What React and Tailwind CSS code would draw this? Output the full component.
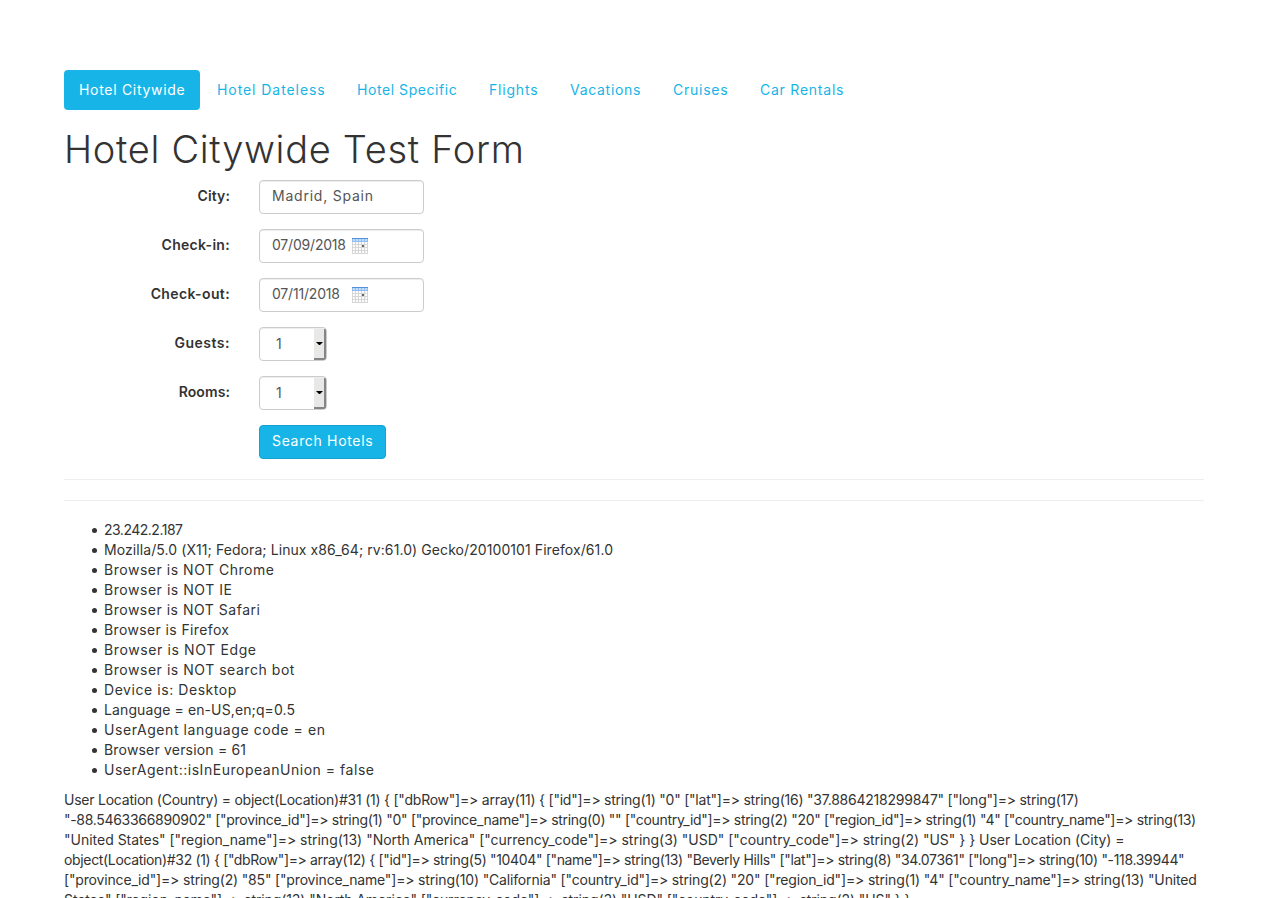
const tabs = [
  { label: "Hotel Citywide", className: "w-[136px] rounded bg-[#17b5e7] text-white tracking-[0.7px]" },
  { label: "Hotel Dateless", className: "w-[138px] tracking-[0.93px]" },
  { label: "Hotel Specific", className: "w-[130px] tracking-[0.56px]" },
  { label: "Flights", className: "w-[79px] tracking-[0.8px]" },
  { label: "Vacations", className: "w-[101px] tracking-[0.7px]" },
  { label: "Cruises", className: "w-[85px] tracking-[0.74px]" },
  { label: "Car Rentals", className: "w-[114px] tracking-[0.76px]" },
];

const facts = [
  { text: "23.242.2.187", className: "tracking-[-0.499px]" },
  { text: "Mozilla/5.0 (X11; Fedora; Linux x86_64; rv:61.0) Gecko/20100101 Firefox/61.0", className: "tracking-[0.081px]" },
  { text: "Browser is NOT Chrome", className: "tracking-[0.527px]" },
  { text: "Browser is NOT IE", className: "tracking-[0.546px]" },
  { text: "Browser is NOT Safari", className: "tracking-[0.518px]" },
  { text: "Browser is Firefox", className: "tracking-[0.375px]" },
  { text: "Browser is NOT Edge", className: "tracking-[0.621px]" },
  { text: "Browser is NOT search bot", className: "tracking-[0.54px]" },
  { text: "Device is: Desktop", className: "tracking-[0.56px]" },
  { text: "Language = en-US,en;q=0.5", className: "tracking-[0.113px]" },
  { text: "UserAgent language code = en", className: "tracking-[0.57px]" },
  { text: "Browser version = 61", className: "tracking-[0.182px]" },
  { text: "UserAgent::isInEuropeanUnion = false", className: "tracking-[0.525px]" },
];

const dump = [
  { text: 'User Location (Country) = object(Location)#31 (1) { ["dbRow"]=> array(11) { ["id"]=> string(1) "0" ["lat"]=> string(16) "37.8864218299847" ["long"]=> string(17)', className: "tracking-[-0.234px]" },
  { text: '"-88.5463366890902" ["province_id"]=> string(1) "0" ["province_name"]=> string(0) "" ["country_id"]=> string(2) "20" ["region_id"]=> string(1) "4" ["country_name"]=> string(13)', className: "tracking-[-0.304px]" },
  { text: '"United States" ["region_name"]=> string(13) "North America" ["currency_code"]=> string(3) "USD" ["country_code"]=> string(2) "US" } } User Location (City) =', className: "tracking-[-0.011px]" },
  { text: 'object(Location)#32 (1) { ["dbRow"]=> array(12) { ["id"]=> string(5) "10404" ["name"]=> string(13) "Beverly Hills" ["lat"]=> string(8) "34.07361" ["long"]=> string(10) "-118.39944"', className: "tracking-[-0.341px]" },
  { text: '["province_id"]=> string(2) "85" ["province_name"]=> string(10) "California" ["country_id"]=> string(2) "20" ["region_id"]=> string(1) "4" ["country_name"]=> string(13) "United', className: "tracking-[-0.165px]" },
  { text: 'States" ["region_name"]=> string(13) "North America" ["currency_code"]=> string(3) "USD" ["country_code"]=> string(2) "US" } }', className: "tracking-[-0.1px]" },
];

const control =
  "flex h-[34px] items-center rounded border border-[#cccccc] bg-white text-[#555555] shadow-[inset_0_1px_1px_rgba(0,0,0,0.075)]";

function CalendarIcon() {
  return (
    <svg className="h-4 w-4 shrink-0" viewBox="0 0 16 16" shapeRendering="crispEdges">
      <rect width="16" height="16" fill="#d6d6d6" />
      <rect width="16" height="4" fill="#8dbdf3" />
      <rect width="16" height="1" fill="#5590da" />
      {[1, 4, 7, 10, 13].map((x) => (
        <g key={x}>
          <rect x={x} y="1" width="2" height="2" fill="#c3dcfa" />
          {[4, 7, 10, 13].map((y) => (
            <rect key={y} x={x} y={y} width="2" height="2" fill="#fcfcfc" />
          ))}
        </g>
      ))}
      <rect x="10" y="7" width="2" height="2" fill="#666666" />
    </svg>
  );
}

function Field({ label, labelClass, children }) {
  return (
    <div className="flex h-[34px] gap-[29px]">
      <div className={`w-[166px] text-right font-semibold leading-[31px] ${labelClass}`}>{label}</div>
      {children}
    </div>
  );
}

function DateInput({ value, className }) {
  return (
    <div className={`${control} w-[165px] pl-3`}>
      <span className={`w-20 pb-0.5 ${className}`}>{value}</span>
      <CalendarIcon />
    </div>
  );
}

function NumberSelect() {
  return (
    <div className={`${control} w-[68px] justify-between overflow-hidden pl-4`}>
      <span className="pb-px">1</span>
      <span className="mt-px flex h-[31px] w-3 items-center justify-center border-b-2 border-r-2 border-[#858585] bg-[#e8e8e7]">
        <svg className="h-[3px] w-[7px]" viewBox="0 0 7 3">
          <path d="M0 0h7L4 3H3z" fill="#000000" />
        </svg>
      </span>
    </div>
  );
}

export default function App() {
  return (
    <div className="h-[898px] w-[1268px] overflow-hidden bg-white px-16 pt-[70px] font-['Inter',sans-serif] text-sm leading-5 text-[#333333]">
      <nav className="flex gap-0.5 text-[#17b5e7]">
        {tabs.map((tab) => (
          <a key={tab.label} className={`h-10 whitespace-nowrap px-[15px] py-2.5 ${tab.className}`}>
            {tab.label}
          </a>
        ))}
      </nav>
      <h1 className="mb-[11px] mt-[19px] whitespace-nowrap text-[38px] font-light leading-10 tracking-[0.69px]">
        Hotel Citywide Test Form
      </h1>
      <form className="flex flex-col gap-[15px]">
        <Field label="City:" labelClass="tracking-[0.1px]">
          <div className={`${control} w-[165px] pl-3`}>
            <span className="pb-0.5 tracking-[0.773px]">Madrid, Spain</span>
          </div>
        </Field>
        <Field label="Check-in:" labelClass="tracking-[0.3px]">
          <DateInput value="07/09/2018" className="tracking-[-0.201px]" />
        </Field>
        <Field label="Check-out:" labelClass="tracking-[0.38px]">
          <DateInput value="07/11/2018" className="tracking-[-0.188px]" />
        </Field>
        <Field label="Guests:" labelClass="tracking-[0.5px]">
          <NumberSelect />
        </Field>
        <Field label="Rooms:" labelClass="tracking-[0.1px]">
          <NumberSelect />
        </Field>
        <Field label="" labelClass="">
          <button type="button" className="h-[34px] w-[127px] whitespace-nowrap rounded border border-[#15a2cf] bg-[#17b5e7] pb-0.5 pl-3 text-left tracking-[0.67px] text-white">
            Search Hotels
          </button>
        </Field>
      </form>
      <hr className="my-5 border-[#eeeeee]" />
      <hr className="mb-[19px] border-[#eeeeee]" />
      <ul className="mb-2.5">
        {facts.map((fact) => (
          <li key={fact.text} className="flex h-5 items-center pl-7">
            <span className="mr-[7px] mt-px h-[5px] w-[5px] rounded-full bg-[#333333]" />
            <span className={`whitespace-nowrap ${fact.className}`}>{fact.text}</span>
          </li>
        ))}
      </ul>
      <div>
        {dump.map((line) => (
          <p key={line.text} className={`whitespace-nowrap ${line.className}`}>{line.text}</p>
        ))}
      </div>
    </div>
  );
}
